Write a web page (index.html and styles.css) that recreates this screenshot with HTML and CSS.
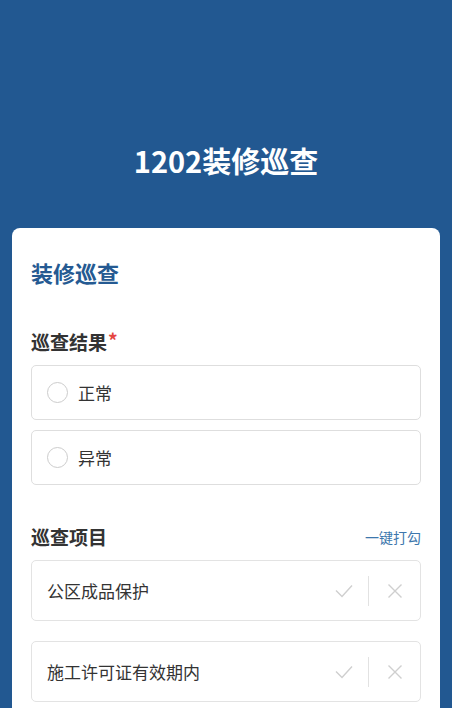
FILE: index.html
```html
<!DOCTYPE html>
<html lang="zh-CN">
<head>
<meta charset="utf-8">
<title>1202装修巡查</title>
<link rel="stylesheet" href="styles.css">
</head>
<body>
<header class="hero">
  <h1 class="hero-title">1202装修巡查</h1>
</header>
<main class="card">
  <h2 class="card-title">装修巡查</h2>

  <div class="field-label">巡查结果<span class="req">*</span></div>
  <div class="options">
    <label class="option"><span class="radio"></span><span class="option-text">正常</span></label>
    <label class="option"><span class="radio"></span><span class="option-text">异常</span></label>
  </div>

  <div class="section-head">
    <div class="field-label">巡查项目</div>
    <a class="quick-link">一键打勾</a>
  </div>
  <div class="items">
    <div class="item">
      <span class="item-text">公区成品保护</span>
      <div class="item-actions">
        <svg class="ic-check" width="18" height="14" viewBox="0 0 18 14"><polyline points="1,6.5 7,12.5 17,1.5" fill="none" stroke="#cfcfcf" stroke-width="1.4"/></svg>
        <span class="divider"></span>
        <svg class="ic-x" width="16" height="16" viewBox="0 0 16 16"><path d="M1.5 1.5 L14.5 14.5 M14.5 1.5 L1.5 14.5" fill="none" stroke="#cfcfcf" stroke-width="1.4"/></svg>
      </div>
    </div>
    <div class="item">
      <span class="item-text">施工许可证有效期内</span>
      <div class="item-actions">
        <svg class="ic-check" width="18" height="14" viewBox="0 0 18 14"><polyline points="1,6.5 7,12.5 17,1.5" fill="none" stroke="#cfcfcf" stroke-width="1.4"/></svg>
        <span class="divider"></span>
        <svg class="ic-x" width="16" height="16" viewBox="0 0 16 16"><path d="M1.5 1.5 L14.5 14.5 M14.5 1.5 L1.5 14.5" fill="none" stroke="#cfcfcf" stroke-width="1.4"/></svg>
      </div>
    </div>
  </div>
</main>
</body>
</html>
```
FILE: styles.css
```css
* { box-sizing: border-box; }
html, body {
  margin: 0;
  padding: 0;
}
body {
  background: #225891;
  font-family: "Noto Sans CJK SC", "Noto Sans", sans-serif;
  color: #333;
  overflow: hidden;
}
.hero {
  height: 228px;
  padding-top: 140px;
}
.hero-title {
  margin: 0;
  text-align: center;
  color: #fff;
  font-size: 29px;
  line-height: 40px;
  font-weight: 700;
}
.card {
  margin: 0 12px;
  background: #fff;
  border-radius: 8px 8px 0 0;
  padding: 29px 19px 40px;
  min-height: 500px;
}
.card-title {
  margin: 0;
  font-size: 22px;
  line-height: 30px;
  font-weight: 700;
  color: #255a92;
}
.field-label {
  margin-top: 42px;
  font-size: 19px;
  line-height: 26px;
  font-weight: 700;
  color: #333;
}
.req {
  color: #e5453f;
  font-weight: 700;
  position: relative;
  top: -2px;
  margin-left: 1px;
}
.options {
  margin-top: 10px;
  display: flex;
  flex-direction: column;
  gap: 10px;
}
.option {
  height: 55px;
  border: 1px solid #dedede;
  border-radius: 5px;
  display: flex;
  align-items: center;
  padding-left: 15px;
  gap: 10px;
}
.radio {
  width: 21px;
  height: 21px;
  border: 1px solid #cccccc;
  border-radius: 50%;
}
.option-text {
  font-size: 17px;
  color: #333;
  line-height: 24px;
}
.section-head {
  margin-top: 39px;
  display: flex;
  justify-content: space-between;
  align-items: center;
}
.section-head .field-label {
  margin-top: 0;
}
.quick-link {
  font-size: 14px;
  color: #3d77ad;
  line-height: 20px;
}
.items {
  margin-top: 10px;
  display: flex;
  flex-direction: column;
  gap: 20px;
}
.item {
  height: 61px;
  border: 1px solid #e3e3e3;
  border-radius: 5px;
  display: flex;
  align-items: center;
  justify-content: space-between;
  padding: 0 17px 0 15px;
}
.item-text {
  font-size: 17px;
  color: #333;
  line-height: 24px;
}
.item-actions {
  display: flex;
  align-items: center;
}
.ic-check { display: block; margin-right: 15px; }
.divider {
  width: 1px;
  height: 30px;
  background: #e2e2e2;
  margin-right: 18px;
}
.ic-x { display: block; }
```
